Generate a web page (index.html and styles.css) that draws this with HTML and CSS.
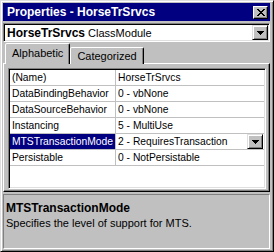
FILE: index.html
```html
<!DOCTYPE html>
<html lang="en">
<head>
    <meta charset="UTF-8">
    <title>Properties - HorseTrSrvcs</title>
    <link rel="stylesheet" href="styles.css">
</head>
<body>
    <div class="window">
        <div class="titlebar">
            <span class="title">Properties - HorseTrSrvcs</span>
            <span class="close-btn">
                <svg width="8" height="7" viewBox="0 0 8 7" shape-rendering="crispEdges">
                    <path fill="#000" d="M0 0h2v1H0z M6 0h2v1H6z M1 1h2v1H1z M5 1h2v1H5z M2 2h4v1H2z M3 3h2v1H3z M2 4h4v1H2z M1 5h2v1H1z M5 5h2v1H5z M0 6h2v1H0z M6 6h2v1H6z"/>
                </svg>
            </span>
        </div>

        <div class="combo">
            <span class="combo-text"><b>HorseTrSrvcs</b> ClassModule</span>
            <span class="drop-btn">
                <svg width="7" height="4" viewBox="0 0 7 4" shape-rendering="crispEdges">
                    <path fill="#000" d="M0 0h7v1H0z M1 1h5v1H1z M2 2h3v1H2z M3 3h1v1H3z"/>
                </svg>
            </span>
        </div>

        <div class="tabs">
            <div class="tab active">Alphabetic</div>
            <div class="tab">Categorized</div>
        </div>

        <div class="tab-panel">
            <div class="grid">
                <div class="row">
                    <div class="name">(Name)</div>
                    <div class="value">HorseTrSrvcs</div>
                </div>
                <div class="row">
                    <div class="name">DataBindingBehavior</div>
                    <div class="value">0 - vbNone</div>
                </div>
                <div class="row">
                    <div class="name">DataSourceBehavior</div>
                    <div class="value">0 - vbNone</div>
                </div>
                <div class="row">
                    <div class="name">Instancing</div>
                    <div class="value">5 - MultiUse</div>
                </div>
                <div class="row selected">
                    <div class="name">MTSTransactionMode</div>
                    <div class="value">
                        <span>2 - RequiresTransaction</span>
                        <span class="drop-btn small">
                            <svg width="7" height="4" viewBox="0 0 7 4" shape-rendering="crispEdges">
                                <path fill="#000" d="M0 0h7v1H0z M1 1h5v1H1z M2 2h3v1H2z M3 3h1v1H3z"/>
                            </svg>
                        </span>
                    </div>
                </div>
                <div class="row">
                    <div class="name">Persistable</div>
                    <div class="value">0 - NotPersistable</div>
                </div>
            </div>
        </div>

        <div class="desc">
            <div class="desc-title">MTSTransactionMode</div>
            <div class="desc-text">Specifies the level of support for MTS.</div>
        </div>
    </div>
</body>
</html>
```

FILE: styles.css
```css
:root {
    --face: #c0c0c0;
    --light: #dfdfdf;
    --shadow: #808080;
    --navy: #000080;
}

* {
    margin: 0;
    padding: 0;
    box-sizing: border-box;
}

body {
    font-family: "Liberation Sans", Arial, sans-serif;
    font-size: 11px;
    color: #000;
    background-color: var(--face);
    width: 274px;
    height: 252px;
    overflow: hidden;
}

.window {
    width: 274px;
    height: 252px;
    background-color: var(--face);
    border: 1px solid;
    border-color: var(--light) #000 #000 var(--light);
    box-shadow: inset 1px 1px #fff, inset -1px -1px var(--shadow);
    padding: 2px 3px 2px 2px;
    display: flex;
    flex-direction: column;
}

/* title bar */
.titlebar {
    height: 18px;
    background-color: var(--navy);
    display: flex;
    align-items: center;
    justify-content: space-between;
    padding: 0 2px 0 4px;
}

.title {
    color: #fff;
    font-weight: 700;
    font-size: 12px;
}

.close-btn {
    width: 15px;
    height: 13px;
    display: flex;
    align-items: center;
    justify-content: center;
    background-color: var(--face);
    border: 1px solid;
    border-color: #fff #000 #000 #fff;
    box-shadow: inset -1px -1px var(--shadow);
}

/* object combo */
.combo {
    margin-top: 2px;
    height: 19px;
    background-color: #fff;
    border: 1px solid;
    border-color: var(--shadow) #fff #fff var(--shadow);
    box-shadow: inset 1px 1px #000, inset -1px -1px var(--light);
    padding: 1px 1px 1px 3px;
    display: flex;
    align-items: center;
    justify-content: space-between;
}

.combo-text {
    font-size: 11px;
}

.combo-text b {
    font-size: 12px;
}

.drop-btn {
    width: 16px;
    height: 15px;
    display: flex;
    align-items: center;
    justify-content: center;
    background-color: var(--face);
    border: 1px solid;
    border-color: var(--light) #000 #000 var(--light);
    box-shadow: inset 1px 1px #fff, inset -1px -1px var(--shadow);
}

.drop-btn.small {
    height: 15px;
    margin-right: 1px;
}

/* tabs */
.tabs {
    margin-top: 2px;
    height: 20px;
    margin-bottom: -1px;
    display: flex;
    align-items: flex-end;
    padding-left: 2px;
    position: relative;
    z-index: 1;
}

.tab {
    height: 17px;
    padding: 0 6px;
    display: flex;
    align-items: center;
    border: 1px solid;
    border-bottom: none;
    border-color: #fff #000 transparent #fff;
    border-radius: 2px 2px 0 0;
    box-shadow: inset -1px 0 var(--shadow);
    background-color: var(--face);
}

.tab.active {
    height: 21px;
    padding-bottom: 2px;
}

/* tab panel + grid */
.tab-panel {
    height: 129px;
    border: 1px solid;
    border-color: #fff #000 #000 #fff;
    box-shadow: inset -1px -1px var(--shadow);
    padding: 4px 3px 2px 4px;
}

.grid {
    height: 100%;
    background-color: #fff;
    border: 1px solid;
    border-color: var(--shadow) #fff #fff var(--shadow);
    box-shadow: inset 1px 1px #000, inset -1px -1px var(--light);
    padding: 1px;
    font-size: 10.3px;
}

.row {
    display: flex;
    height: 16px;
    border-bottom: 1px solid var(--face);
}

.name {
    width: 106px;
    padding-left: 2px;
    border-right: 1px solid var(--face);
    display: flex;
    align-items: center;
    white-space: nowrap;
}

.value {
    flex: 1;
    padding-left: 2px;
    display: flex;
    align-items: center;
    justify-content: space-between;
    white-space: nowrap;
}

.selected .name {
    background-color: var(--navy);
    color: #fff;
}

/* description pane */
.desc {
    flex: 1;
    margin-top: 2px;
    border: 1px solid;
    border-color: var(--shadow) #fff #fff var(--shadow);
    padding: 6px 2px 0 2px;
    line-height: 15px;
}

.desc-title {
    font-weight: 700;
    font-size: 12px;
}

.desc-text {
    font-size: 11px;
}
```
